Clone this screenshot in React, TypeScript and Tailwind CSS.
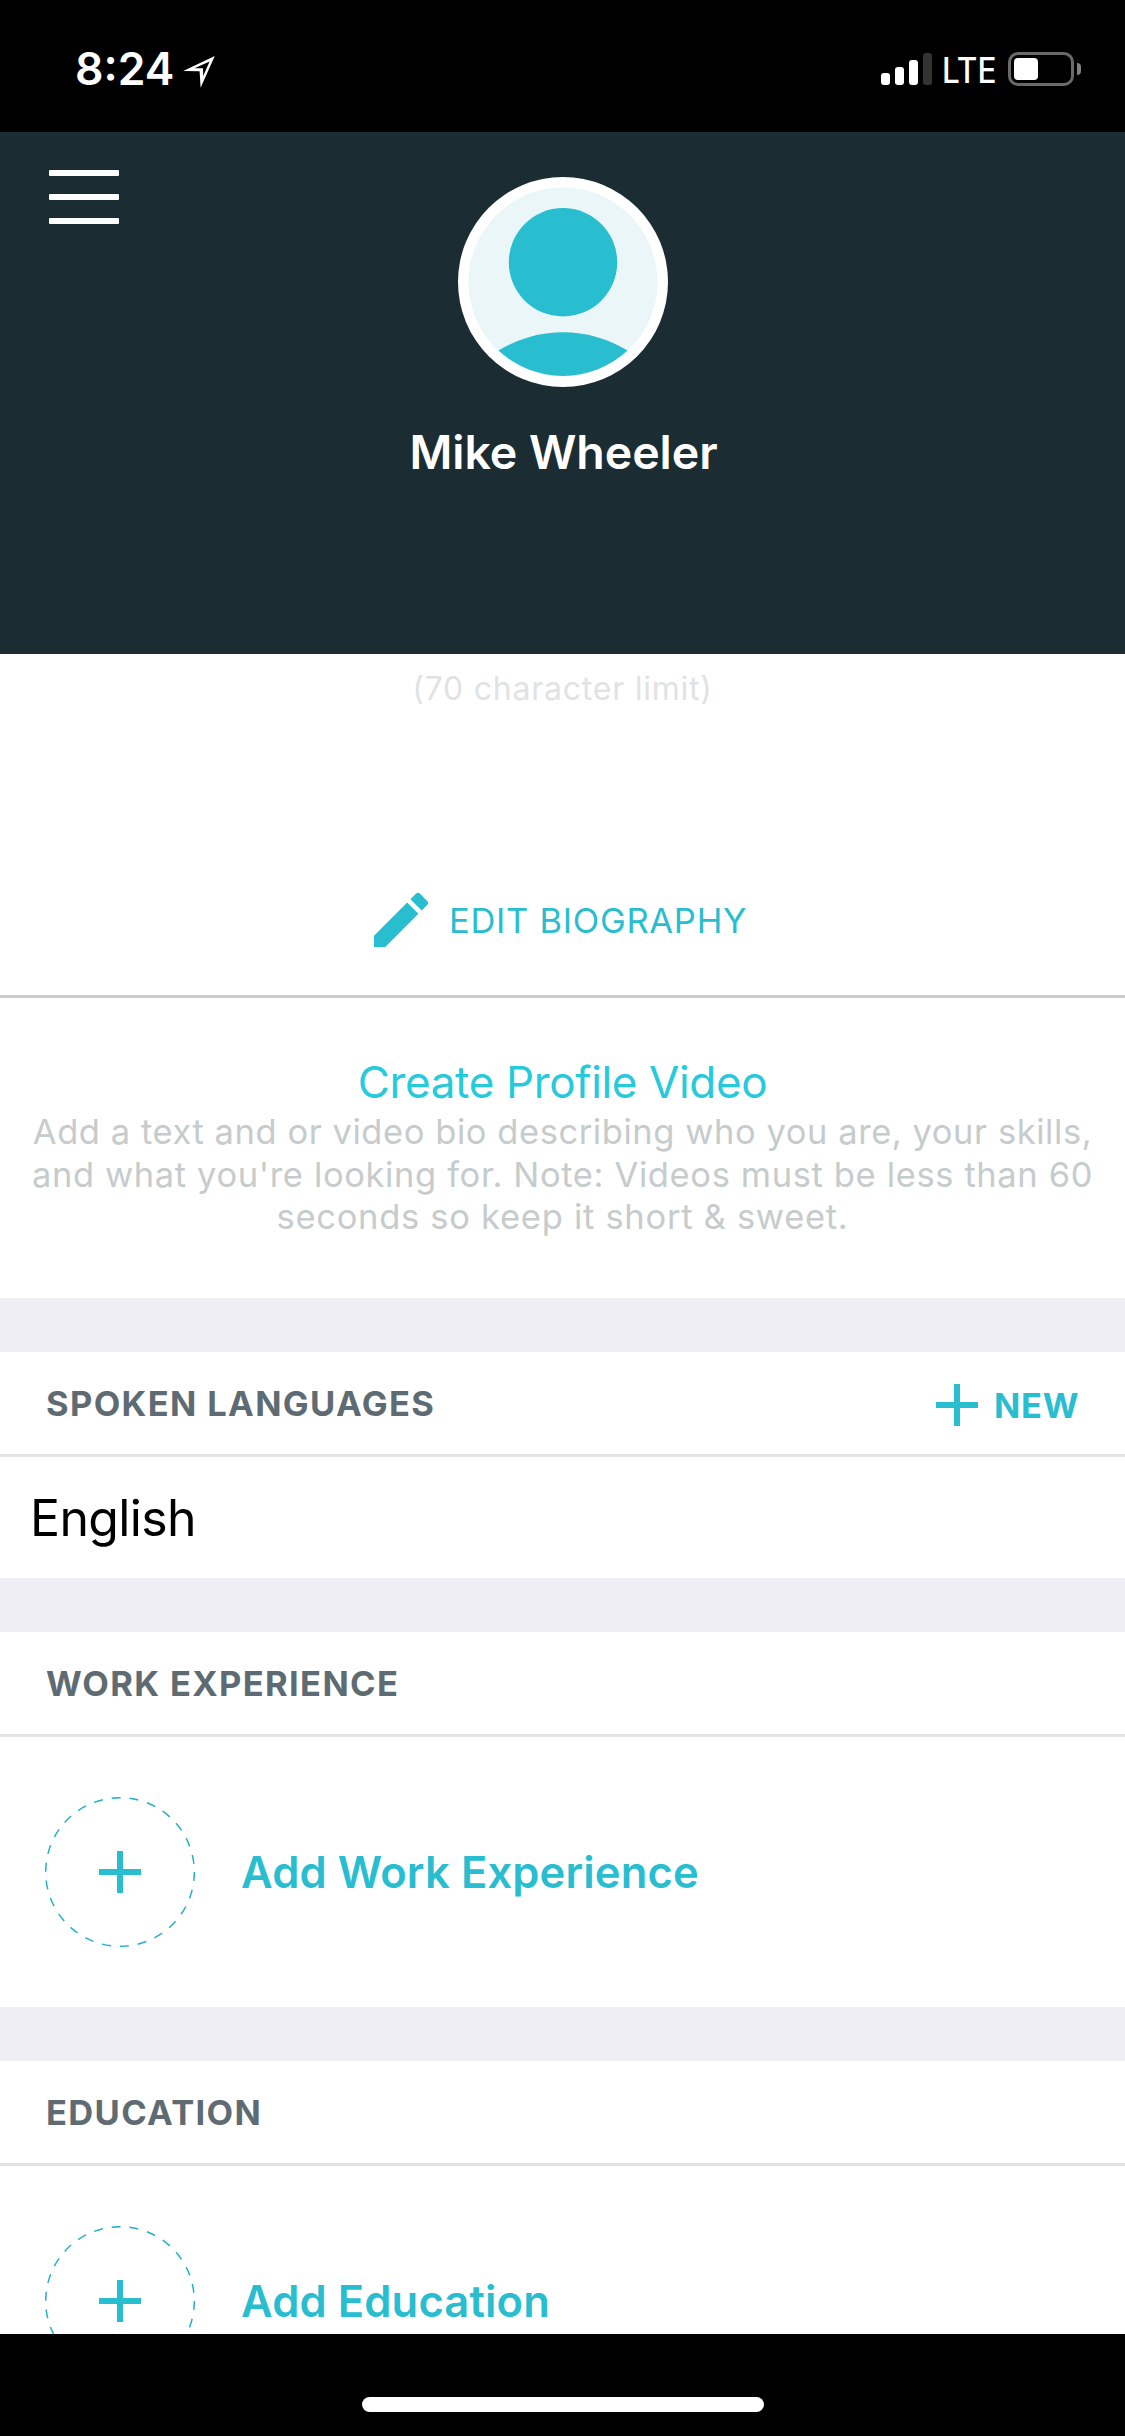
import type { ReactNode } from "react";
import { MdEdit } from "react-icons/md";

function StatusBar() {
  return (
    <div className="flex h-[132px] shrink-0 bg-black text-white">
      <div className="flex h-[139px] w-[183px] items-center pl-[75px] text-[44.5px] font-semibold">8:24</div>
      <svg className="mt-[56px] h-8 w-8" viewBox="0 0 32 32" fill="currentColor" fillRule="evenodd">
        <path d="M31.8 0 L0.2 15 L16.6 15.3 L17.6 31.8 Z M26.6 5.6 L11.5 12.3 L20 12.3 L20.2 20 Z" />
      </svg>
      <div className="ml-auto flex pr-[44px]">
        <div className="mt-[53px] flex h-8 items-end gap-[5px]">
          <div className="h-3 w-[9px] rounded-[3px] bg-white" />
          <div className="h-[18px] w-[9px] rounded-[3px] bg-white" />
          <div className="h-[25px] w-[9px] rounded-[3px] bg-white" />
          <div className="h-8 w-[9px] rounded-[3px] bg-[#333333]" />
        </div>
        <div className="flex h-[141px] w-[76px] items-center pl-[10px]">
          <span className="origin-left scale-x-90 text-[35px] font-medium">LTE</span>
        </div>
        <div className="mt-[52px] h-[34px] w-[66px] rounded-[10px] border-[3px] border-[#6a6a6a] p-[3px]">
          <div className="h-[22px] w-6 rounded-[4px] bg-white" />
        </div>
        <div className="mt-[63px] ml-[3px] h-3 w-1 rounded-r-full bg-[#808080]" />
      </div>
    </div>
  );
}

function ProfileHeader() {
  return (
    <header className="flex h-[522px] shrink-0 bg-[#1b2c33]">
      <div className="flex w-[125px] flex-col gap-[18px] pt-[38px] pl-[49px]">
        <div className="h-[6px] w-[70px] rounded-[1px] bg-white" />
        <div className="h-[6px] w-[70px] rounded-[1px] bg-white" />
        <div className="h-[6px] w-[70px] rounded-[1px] bg-white" />
      </div>
      <div className="flex flex-1 flex-col items-center pt-[45px]">
        <svg className="ml-px h-[210px] w-[210px]" viewBox="0 0 210 210">
          <circle cx="105" cy="105" r="105" fill="#ffffff" />
          <circle cx="105" cy="105" r="94.5" fill="#eaf6f8" />
          <circle cx="105" cy="85.3" r="54.2" fill="#29bdd0" />
          <path d="M40.5 173.5 A123 123 0 0 1 169.5 173.5 A94.5 94.5 0 0 1 40.5 173.5 Z" fill="#29bdd0" />
        </svg>
        <h1 className="mt-[33px] ml-[2px] text-[46.5px] leading-[64px] font-semibold tracking-[-0.05px] text-white">
          Mike Wheeler
        </h1>
      </div>
      <div className="w-[125px]" />
    </header>
  );
}

function Biography() {
  return (
    <section className="h-[344px] shrink-0 border-b-[3px] border-[#c7cccc] pt-[15px]">
      <p className="text-center text-[32px] leading-[40px] tracking-[0.76px] text-[#dfe3e3]">
        (70 character limit)
      </p>
      <div className="mt-[175px] flex items-center pl-[365px] text-[#29bdd0]">
        <MdEdit className="h-[72px] w-[72px]" />
        <span className="ml-[12px] pt-[2px] text-[34.5px] tracking-[0.73px]">EDIT BIOGRAPHY</span>
      </div>
    </section>
  );
}

function ProfileVideo() {
  return (
    <section className="h-[300px] shrink-0 pt-[56px] text-center">
      <h2 className="text-[44px] leading-[56px] tracking-[-0.36px] text-[#26cadb]">Create Profile Video</h2>
      <p className="mt-px text-[34.5px] leading-[42.5px] tracking-[0.56px] whitespace-nowrap text-[#c6cbcc]">
        Add a text and or video bio describing who you are, your skills,
        <br />
        <span className="tracking-[0.63px]">and what you're looking for. Note: Videos must be less than 60</span>
        <br />
        <span className="tracking-[0.72px]">seconds so keep it short &amp; sweet.</span>
      </p>
    </section>
  );
}

function Plus() {
  return (
    <svg className="h-[42px] w-[42px]" viewBox="0 0 42 42" stroke="#29bdd0" strokeWidth="6">
      <path d="M21 0 V42 M0 21 H42" />
    </svg>
  );
}

function Section({ title, action, children }: { title: string; action?: ReactNode; children: ReactNode }) {
  return (
    <section className="shrink-0 border-t-[54px] border-[#efeef4]">
      <div className="flex h-[105px] items-center justify-between border-b-[3px] border-[#e1e2e2] pl-[46px]">
        <h3 className="pt-[2px] text-[34.5px] font-bold tracking-[1.35px] text-[#5f6b72]">{title}</h3>
        {action}
      </div>
      {children}
    </section>
  );
}

function AddRow({ label }: { label: string }) {
  return (
    <div className="flex h-[270px] items-center gap-[46px] pl-[45px]">
      <div className="grid place-items-center">
        <svg className="col-start-1 row-start-1 h-[150px] w-[150px]" viewBox="0 0 150 150">
          <circle cx="75" cy="75" r="74.3" fill="none" stroke="#22b2c5" strokeWidth="1.5" strokeDasharray="9 8.955" />
        </svg>
        <div className="col-start-1 row-start-1">
          <Plus />
        </div>
      </div>
      <span className="pt-px text-[43.5px] font-semibold tracking-[0.15px] text-[#29bdd0]">{label}</span>
    </div>
  );
}

export default function App() {
  return (
    <div className="flex h-[2436px] w-[1125px] flex-col overflow-hidden bg-white font-['Inter',sans-serif]">
      <StatusBar />
      <ProfileHeader />
      <main className="flex h-[1680px] shrink-0 flex-col overflow-hidden">
        <Biography />
        <ProfileVideo />
        <Section
          title="SPOKEN LANGUAGES"
          action={
            <div className="flex w-[189px] items-center gap-4 pt-[4px] text-[#29bdd0]">
              <Plus />
              <span className="pt-px text-[34.5px] font-bold tracking-[0.7px]">NEW</span>
            </div>
          }
        >
          <div className="flex h-[121px] items-center pt-[2px] pl-[30px] text-[50px] tracking-[-0.64px] text-black">
            English
          </div>
        </Section>
        <Section title="WORK EXPERIENCE">
          <AddRow label="Add Work Experience" />
        </Section>
        <Section title="EDUCATION">
          <AddRow label="Add Education" />
        </Section>
      </main>
      <footer className="flex h-[102px] shrink-0 justify-center bg-black pt-[63px]">
        <div className="h-[15px] w-[402px] rounded-full bg-white" />
      </footer>
    </div>
  );
}
